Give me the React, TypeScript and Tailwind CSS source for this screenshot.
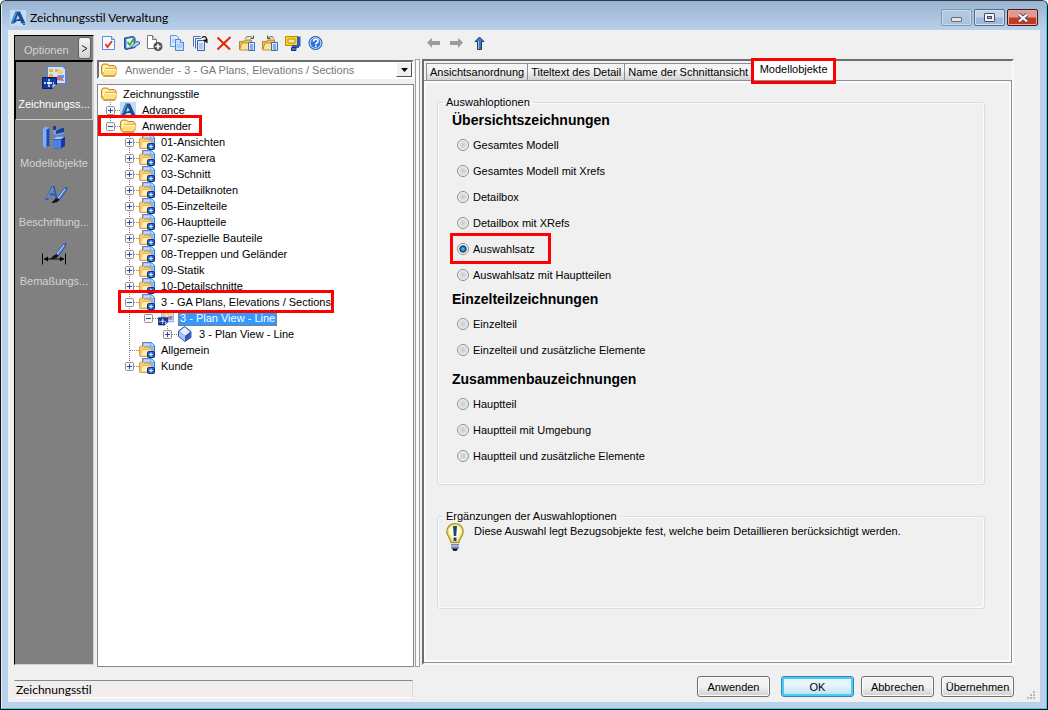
import { useState } from "react";
import type { ReactNode } from "react";

/* ---------- icons ---------- */

function Folder() {
  return (
    <svg width="17" height="16" viewBox="0 0 17 16" className="shrink-0">
      <path d="M.5 11.500V3.500l1.500-1.500h4.500L8 3.500h5.500L15 5v7l-1.500 2H2.500z" fill="#f5c24c" stroke="#c48a20" />
      <path d="M1.500 10V4l1-1H6l1.500 1.500h5.500l1 1H4.500L3 10z" fill="#fff3bf" />
      <path d="M4 6.500h12L13.800 13.500H2.300z" fill="#fddf85" />
      <path d="M4 6.500h12l-.5 1.500" fill="none" stroke="#e2aa3c" strokeWidth=".8" />
      <path d="M4.500 7.500h10.500" stroke="#fff8d8" />
      <path d="M2.500 14h11.500" stroke="#b9801a" />
    </svg>
  );
}

function FolderDoc() {
  return (
    <svg width="17" height="16" viewBox="0 0 17 16" className="shrink-0">
      <path d="M3.500 5V.500h9l3 3V11h-3z" fill="#8fb9f5" stroke="#4a80d8" />
      <path d="M5 1.500h6v2H5z" fill="#c9deff" />
      <path d="M12 .5v3.500h3.500z" fill="#fff" stroke="#4a80d8" strokeWidth=".6" />
      <path d="M.5 12.500V5l1-1h3l1.200 1.200h5l.8 1.300v2L9 14.500H1z" fill="#fbd06c" stroke="#e09b30" />
      <path d="M3.500 7.500h9L9.500 14H1.200z" fill="#fff0ba" stroke="#e8ac4c" strokeWidth=".8" />
      <rect x="8.500" y="9.500" width="7" height="6" rx="1" fill="#2a63c4" stroke="#0d2f80" />
      <path d="M12 10.500v4M10 12.500h4" stroke="#c9f4ff" strokeWidth="1.200" />
    </svg>
  );
}

function AdvanceLogo() {
  return (
    <svg width="16" height="16" viewBox="0 0 16 16" className="shrink-0">
      <rect width="16" height="16" fill="#c3dcf4" />
      <path d="M5.500 1.500h4.500L15.500 13.500h-4L10.500 11H7l-3 2.500H.8z" fill="#1a4f93" />
      <path d="M7.800 5 9.500 8.800 6 9.800z" fill="#c3dcf4" />
      <path d="M5.500 1.500h2L3 12.500.8 13.500z" fill="#4a8fd4" />
      <path d="M13 14.500h2" stroke="#1a4f93" />
    </svg>
  );
}

function StyleIcon({ size = 16 }: { size?: number }) {
  return (
    <svg width={size} height={size} viewBox="0 0 24 24" className="shrink-0">
      <path d="M5.500.5h15l3 3v14h-18z" fill="#cfe2ff" stroke="#4f83dd" />
      <path d="M7 3h4v3H7zM13 3h3v3h-3zM7 8h4v3H7z" fill="#f4b422" />
      <circle cx="18" cy="6" r="2.500" fill="#f7d35c" />
      <path d="m13 14 3-5 4 2 2 4z" fill="#c76f7e" />
      <path d="M17 9h5v3h-4z" fill="#5f95e8" />
      <path d="M.5 11.500h14v7l-4 4H.5z" fill="#123aa0" stroke="#0a1f6b" />
      <path d="M10.500 22.500v-4h4z" fill="#b9d4ff" />
      <path d="M7 13v8M2 17h10" stroke="#fff" strokeWidth="1.300" strokeDasharray="2 1" />
      <circle cx="7" cy="17" r="1.600" fill="#fff" />
    </svg>
  );
}

function Cube() {
  return (
    <svg width="16" height="16" viewBox="0 0 16 16" className="shrink-0">
      <path d="M1.500 5 7.500.5l6.500 5v6L8 15.500l-6.500-5z" fill="#5f86dc" stroke="#3355a8" />
      <path d="M2.500 5.300 7.500 1.300l5.500 4.500-5 4z" fill="#e4efff" />
      <path d="M2 5.800 8 10v5L2 10.300z" fill="#a9c6f7" />
      <path d="M8 10l5.500-4v5.300L8 15z" fill="#3557b4" />
    </svg>
  );
}

function ModelIcon() {
  return (
    <svg width="24" height="24" viewBox="0 0 24 24">
      <path d="M1 4 3.500 1.500 7.500 3v18L3 23l-2-2z" fill="#7db0fa" />
      <path d="M4.500 4.500 7.500 3v18L4.500 22z" fill="#1d49a8" />
      <path d="M11 1h3v5l6-3h2v6l-8 2-3-2z" fill="#1b3f97" />
      <path d="M11 5h3v4l8-2v2l-8 2-3-2z" fill="#6f9cf0" />
      <path d="m11 14 4-2.500h8V21l-4 2.500h-8z" fill="#17399a" />
      <path d="M11 14.500h8v9h-8z" fill="#4a7fe4" />
      <path d="m11 14 4-2.500h8L19 14z" fill="#9fc2fb" />
    </svg>
  );
}

function Brush() {
  return (
    <g>
      <path d="m13 14 7-9 3-2-1 4-6.500 9z" fill="#4a86e8" stroke="#183f96" strokeWidth=".7" />
      <path d="m14 14 7-9" stroke="#d3e6ff" />
      <path d="M15.500 15.500C14 19 9 19 7 19c2-1 3-4 6-4.500z" fill="#111" />
    </g>
  );
}

function TextStyleIcon() {
  return (
    <svg width="28" height="24" viewBox="-4 0 28 24">
      <path d="m3 15 5-12h2l2.500 11M5.500 10.500h6M1.500 15h3M10.500 14.500h3" fill="none" stroke="#2a58c4" strokeWidth="1.800" />
      <path d="m3.500 14 5-11" stroke="#8eb6ff" strokeWidth=".8" />
      <Brush />
    </svg>
  );
}

function DimensionIcon() {
  return (
    <svg width="26" height="24" viewBox="0 0 26 24">
      <path d="M1.500 10.500v11M24.500 10.500v11M3 16h20" stroke="#000" />
      <path d="m3 16 4-2.500v5zM23 16l-4-2.500v5z" fill="#000" />
      <g transform="translate(2 -3)">
        <Brush />
      </g>
    </svg>
  );
}

function Bulb() {
  return (
    <svg width="18" height="28" viewBox="0 0 18 28" className="shrink-0">
      <path d="M9 .7C4.200.7.800 4.200.800 8.500c0 5 4 6.500 4.200 11h8c.2-4.500 4.200-6 4.200-11C17.200 4.200 13.800.7 9 .7z" fill="#f4e27a" stroke="#a8962a" strokeWidth="1.300" />
      <path d="M9 2.500c-3.500 0-6 2.500-6 5.500 0 4 3.500 5 3.800 10h4.400c.3-5 3.800-6 3.800-10 0-3-2.500-5.500-6-5.500z" fill="#fffbd8" />
      <path d="M7 3h4l-.8 10H7.800zM7.500 14.500h3V18h-3z" fill="#1d4677" />
      <path d="M5 20h8v5l-2 2H7l-2-2z" fill="#7e86b8" />
      <path d="M5 20.500h8M5 23h8" stroke="#d5daf4" />
      <path d="M6 25.500h6L10.500 28h-3z" fill="#1a1a2a" />
    </svg>
  );
}

const toolIcons: { label: string; icon: ReactNode }[] = [
  {
    label: "Prüfen",
    icon: (
      <>
        <path d="M1.500 1.500h9l3 3v10h-12z" fill="#f7faff" stroke="#5a8ad8" />
        <path d="M10.500 1.500v3h3" fill="#cfe0fb" stroke="#5a8ad8" />
        <path d="m4.500 9 2 3L11 6" fill="none" stroke="#e83a1c" strokeWidth="2" />
      </>
    ),
  },
  {
    label: "Übernehmen und bearbeiten",
    icon: (
      <>
        <path d="M.5 3 9 1.500l2 1.500v9.500L2 14.500l-1.500-1z" fill="#3d7bd6" stroke="#1c4b93" />
        <path d="m2.500 4 7-1.200v8.700l-7 1.500z" fill="#eef8e6" />
        <path d="m3.500 7 2.200 3L9.500 4" fill="none" stroke="#2fa832" strokeWidth="1.800" />
        <path d="m7 11.500 5-5 3.500.5v2l-6 3.500z" fill="#a9ccf3" stroke="#1c4b93" strokeWidth=".8" />
      </>
    ),
  },
  {
    label: "Neu",
    icon: (
      <>
        <path d="M.5.5h5l4 4v9h-9z" fill="#fff" stroke="#777" />
        <path d="M5.500.5v4h4" fill="#ddd" stroke="#777" />
        <circle cx="11" cy="11.500" r="4.500" fill="#505050" />
        <path d="M11 8.800v5.400M8.300 11.500h5.400" stroke="#fff" strokeWidth="1.600" />
      </>
    ),
  },
  {
    label: "Kopieren",
    icon: (
      <>
        <path d="M.5.5h6l2 2v9h-8z" fill="#dceaff" stroke="#5f93e2" />
        <path d="M5.500 4.500h5l3 3v8h-8z" fill="#c9defd" stroke="#4f85d8" />
        <path d="M10.500 4.500v3h3" fill="#fff" stroke="#4f85d8" />
        <path d="M7 10h5M7 12h5M2 5h3M2 7h2" stroke="#8fb5f0" />
      </>
    ),
  },
  {
    label: "Mehrfach kopieren",
    icon: (
      <>
        <path d="M.5 11.500v-10h7M2.500 13.500v-10h6" fill="none" stroke="#4a72b8" />
        <path d="M4.500 5.500h7v10h-7z" fill="#dce9fc" stroke="#3b5f9e" />
        <path d="M6 9h4M6 11h4M6 13h4" stroke="#80a4d8" />
        <path d="M9 2.500c3-2 5-.5 4.500 3" fill="none" stroke="#111" strokeWidth="1.300" />
        <path d="m10 5 4.500-1v4.500z" fill="#111" />
      </>
    ),
  },
  {
    label: "Löschen",
    icon: <path d="m1.500 2.500 12.500 12M14.500 2 1.500 14.500" fill="none" stroke="#e0260c" strokeWidth="2" />,
  },
  {
    label: "Importieren",
    icon: (
      <>
        <path d="M.5 14.500v-8h4l1-1.500h7v3" fill="#f0bd50" stroke="#b8862a" />
        <path d="M3 8h12l-2 7H.7z" fill="#fde29a" stroke="#c4922e" />
        <path d="M6 3.500c2-2.500 5-2.500 7.500-1M14.500.5v3h-3" fill="none" stroke="#555" />
        <path d="M9.500 7.500h6v8h-6z" fill="#dbe9ff" stroke="#3a6cc0" />
        <path d="M11 10h3M11 12h3M11 14h3" stroke="#3a6cc0" />
      </>
    ),
  },
  {
    label: "Exportieren",
    icon: (
      <>
        <path d="M.5 14.500v-8h4l1-1.500h7v3" fill="#f0bd50" stroke="#b8862a" />
        <path d="M3 8h12l-2 7H.7z" fill="#fde29a" stroke="#c4922e" />
        <path d="M12 3.500c-1.500-2.500-4-2-6-1M5.500.5v3h3" fill="none" stroke="#555" />
        <path d="M9.500 7.500h6v8h-6z" fill="#dbe9ff" stroke="#3a6cc0" />
        <path d="M11 10h3M11 12h3M11 14h3" stroke="#3a6cc0" />
      </>
    ),
  },
  {
    label: "Komprimieren",
    icon: (
      <>
        <path d="M.5 1.500h12v9H.5z" fill="#fbd02f" stroke="#c28a08" />
        <path d="M3 4h7v4H3z" fill="#fdeb9a" stroke="#c28a08" />
        <path d="M12 1.500h3.500v10H12zM7 10h7v3H7z" fill="#2d5bb8" />
        <path d="M6.500 12.500H11v3H6.500z" fill="#3d6fd0" stroke="#16367c" />
      </>
    ),
  },
  {
    label: "Hilfe",
    icon: (
      <>
        <circle cx="7.500" cy="8" r="6.500" fill="#2f73dd" stroke="#1b4fae" />
        <circle cx="7.500" cy="8" r="5.400" fill="none" stroke="#dceaff" />
        <path d="M5.500 6.500c0-3 4.500-3 4.500-.3C10 7.800 7.700 7.700 7.700 9.500" fill="none" stroke="#fff" strokeWidth="1.600" />
        <path d="M6.900 10.500h1.700v1.600H6.900z" fill="#fff" />
      </>
    ),
  },
];

const arrowPath = "M1 7.500 6 3v3h8v4H6v3z";

/* ---------- tree ---------- */

type Cell = "none" | "line" | "tee" | "end";
type Node = {
  text: string;
  cells: Cell[];
  box?: "+" | "-";
  icon: ReactNode;
  selected?: boolean;
  mark?: string;
};

const folderNode = (text: string): Node => ({
  text,
  cells: ["none", "tee"],
  box: "+",
  icon: <FolderDoc />,
});

const nodes: Node[] = [
  { text: "Zeichnungsstile", cells: [], icon: <Folder /> },
  { text: "Advance", cells: ["tee"], box: "+", icon: <AdvanceLogo /> },
  { text: "Anwender", cells: ["end"], box: "-", icon: <Folder />, mark: "-left-[3px] -top-[3px] h-[21px] w-[104px]" },
  folderNode("01-Ansichten"),
  folderNode("02-Kamera"),
  folderNode("03-Schnitt"),
  folderNode("04-Detailknoten"),
  folderNode("05-Einzelteile"),
  folderNode("06-Hauptteile"),
  folderNode("07-spezielle Bauteile"),
  folderNode("08-Treppen und Geländer"),
  folderNode("09-Statik"),
  folderNode("10-Detailschnitte"),
  {
    text: "3 - GA Plans, Elevations / Sections",
    cells: ["none", "tee"],
    box: "-",
    icon: <FolderDoc />,
    mark: "left-[17px] -top-1 h-[23px] w-[216px]",
  },
  { text: "3 - Plan View - Line", cells: ["none", "line", "end"], box: "-", icon: <StyleIcon />, selected: true },
  { text: "3 - Plan View - Line", cells: ["none", "line", "none", "end"], box: "+", icon: <Cube /> },
  { text: "Allgemein", cells: ["none", "tee"], icon: <FolderDoc /> },
  { text: "Kunde", cells: ["none", "end"], box: "+", icon: <FolderDoc /> },
];

function Connector({ kind, box }: { kind: Cell; box?: "+" | "-" }) {
  return (
    <svg width="19" height="16" viewBox="0 0 19 16" className="shrink-0">
      {kind !== "none" && (
        <path d={kind === "end" ? "M9.500 0v8" : "M9.500 0v16"} stroke="#808080" strokeDasharray="1 1" />
      )}
      {(kind === "tee" || kind === "end") && <path d="M10 8.500h9" stroke="#808080" strokeDasharray="1 1" />}
      {box && (
        <>
          <rect x="5.500" y="4.500" width="8" height="8" rx="1" fill="#f6f6f6" stroke="#919191" />
          <path d={box === "+" ? "M7 8.500h5M9.500 6v5" : "M7 8.500h5"} stroke="#2b4b9b" />
        </>
      )}
    </svg>
  );
}

function Mark({ className }: { className: string }) {
  return <span className={`pointer-events-none absolute z-10 border-[3px] border-[#ff0000] ${className}`} />;
}

function TreeRow({ node }: { node: Node }) {
  return (
    <li className="relative flex h-4 items-center whitespace-nowrap">
      {node.cells.map((kind, i) => (
        <Connector key={i} kind={kind} box={i === node.cells.length - 1 ? node.box : undefined} />
      ))}
      <span className="flex w-5 shrink-0">{node.icon}</span>
      <span
        className={
          node.selected
            ? "border border-dotted border-[#c66a00] bg-[#3399ff] px-px leading-[14px] text-white"
            : "px-0.5 leading-4"
        }
      >
        {node.text}
      </span>
      {node.mark && <Mark className={node.mark} />}
    </li>
  );
}

/* ---------- option groups ---------- */

const groups = [
  {
    title: "Übersichtszeichnungen",
    options: [
      "Gesamtes Modell",
      "Gesamtes Modell mit Xrefs",
      "Detailbox",
      "Detailbox mit XRefs",
      "Auswahlsatz",
      "Auswahlsatz mit Hauptteilen",
    ],
  },
  { title: "Einzelteilzeichnungen", options: ["Einzelteil", "Einzelteil und zusätzliche Elemente"] },
  {
    title: "Zusammenbauzeichnungen",
    options: ["Hauptteil", "Hauptteil mit Umgebung", "Hauptteil und zusätzliche Elemente"],
  },
];

const sideItems = [
  { label: "Zeichnungss...", icon: <StyleIcon size={24} /> },
  { label: "Modellobjekte", icon: <ModelIcon /> },
  { label: "Beschriftung...", icon: <TextStyleIcon /> },
  { label: "Bemaßungs...", icon: <DimensionIcon /> },
];

const tabs = ["Ansichtsanordnung", "Titeltext des Detail", "Name der Schnittansicht"];

const buttonBase = "h-[21px] w-[73px] rounded-[3px] border text-center leading-[18px]";
const buttonPlain =
  "border-[#707070] bg-linear-to-b from-[#f2f2f2] from-50% to-[#cfcfcf] to-100% shadow-[inset_0_0_0_1px_#fcfcfc]";

function TitleBar() {
  return (
    <header className="flex h-[29px] items-center bg-linear-to-b from-[#99b4d1] to-[#b9d1ea] px-2 pt-1">
      <AdvanceLogo />
      <h1 className="ml-1 flex-1 font-['Lato','Open_Sans',sans-serif] text-[12px] leading-4">
        Zeichnungsstil Verwaltung
      </h1>
      <div className="flex gap-0.5">
        <button
          aria-label="Minimieren"
          className="flex h-[17px] w-[31px] items-center justify-center rounded-[2px] border border-[#7f9bb8] bg-linear-to-b from-[#b5cbe3] to-[#a8c2de] shadow-[inset_0_0_0_1px_#c9daec]"
        >
          <span className="mt-1 h-[5px] w-[11px] rounded-[1px] border border-[#66707c] bg-[#e4e4e0]" />
        </button>
        <button
          aria-label="Maximieren"
          className="flex h-[17px] w-[31px] items-center justify-center rounded-[2px] border border-[#566b85] bg-linear-to-b from-[#c3d4e8] from-45% to-[#a0b9d6] to-55% shadow-[inset_0_0_0_1px_#d3e1f0]"
        >
          <span className="flex h-[9px] w-[11px] items-center justify-center rounded-[1px] border border-[#454c66] bg-[#f4f4f4]">
            <span className="h-[3px] w-[5px] border border-[#454c66] bg-[#9db6d4]" />
          </span>
        </button>
        <button
          aria-label="Schließen"
          className="flex h-[17px] w-[31px] items-center justify-center rounded-[2px] border border-[#4a1420] bg-linear-to-b from-[#e09a8c] from-45% to-[#c23a22] to-55% shadow-[inset_0_0_0_1px_#e8ab9f]"
        >
          <svg width="12" height="10" viewBox="0 0 12 10">
            <path d="m2 1.500 8 7M10 1.500l-8 7" stroke="#4b4b62" strokeWidth="4" />
            <path d="m2 1.500 8 7M10 1.500l-8 7" stroke="#fff" strokeWidth="2.200" />
          </svg>
        </button>
      </div>
    </header>
  );
}

export default function App() {
  const [choice, setChoice] = useState("Auswahlsatz");

  return (
    <div className="flex min-h-screen flex-col overflow-hidden rounded-t-[6px] border border-t-[#33333d] border-r-[#111] border-b-[#111] border-l-[#111] bg-[#b9d1ea] font-['Liberation_Sans',Arial,sans-serif] text-[11px] text-black">
      <div className="flex flex-1 flex-col border-r border-b border-l border-r-[#2fd3ea] border-b-[#2fd3ea] border-l-[#e3f0fb]">
        <TitleBar />
        <main className="mx-1.5 mb-1.5 flex flex-1 flex-col bg-[#f0f0f0]">
          <div className="flex flex-1 pr-[26px] pl-1.5">
            {/* options bar */}
            <nav className="mt-[5px] mb-0.5 w-20 shrink-0 border-t border-r border-b border-l border-t-black border-r-[#d0d0d0] border-b-[#d0d0d0] border-l-black bg-[#808080] text-[#d6d3ce]">
              <div className="flex h-[25px] items-center justify-between border-b border-black pr-0.5 pl-[9px]">
                <span className="pt-1">Optionen</span>
                <button
                  aria-label="Optionen einklappen"
                  className="h-[22px] w-[13px] rounded-[3px] border border-[#606060] bg-linear-to-b from-[#f4f4f4] to-[#d2d2d2] text-black"
                >
                  <svg width="11" height="9" viewBox="0 0 11 9">
                    <path d="m3 1.500 5 3-5 3" fill="none" stroke="#222" />
                  </svg>
                </button>
              </div>
              {sideItems.map((item, i) => (
                <button
                  key={item.label}
                  className={`flex h-[59px] w-full flex-col items-center border pt-1 ${
                    i === 0 ? "border-t-black border-r-[#d4d0c8] border-b-[#d4d0c8] border-l-black text-white" : "border-transparent"
                  }`}
                >
                  {item.icon}
                  <span className="mt-1.5 leading-4">{item.label}</span>
                </button>
              ))}
            </nav>

            {/* style tree */}
            <section className="ml-[3px] flex w-[317px] shrink-0 flex-col">
              <div className="flex h-[30px] pb-1">
                {toolIcons.map((tool) => (
                  <button key={tool.label} aria-label={tool.label} className="flex w-[23px] items-center justify-center">
                    <svg width="16" height="16" viewBox="0 0 16 16">
                      {tool.icon}
                    </svg>
                  </button>
                ))}
              </div>
              <div className="flex h-[19px] items-center border-2 border-t-[#6d6d6d] border-r-white border-b-white border-l-[#6d6d6d] bg-white pl-0.5">
                <Folder />
                <select
                  aria-label="Zeichnungsstil"
                  className="h-4 min-w-0 flex-1 appearance-none bg-transparent pl-[7px] leading-4 text-[#777]"
                >
                  <option>Anwender - 3 - GA Plans, Elevations / Sections</option>
                </select>
                <span className="flex h-[15px] w-4 items-center justify-center border border-t-white border-r-[#555] border-b-[#555] border-l-white bg-[#f0f0f0]">
                  <svg width="7" height="4" viewBox="0 0 7 4">
                    <path d="M0 0h7L3.500 4z" fill="#000" />
                  </svg>
                </span>
              </div>
              <ul className="mt-[5px] flex-1 border border-[#828790] bg-white pt-px pl-[3px]">
                {nodes.map((node, i) => (
                  <TreeRow key={i} node={node} />
                ))}
              </ul>
            </section>

            {/* splitter */}
            <div className="mt-[29px] ml-px w-[5px] shrink-0 border border-[#a0a0a0] bg-[#f8f8f8]" />

            {/* detail pane */}
            <section className="ml-0.5 flex min-w-0 flex-1 flex-col">
              <div className="flex h-[29px] pb-[3px]">
                <button aria-label="Zurück" className="flex w-[23px] items-center justify-center">
                  <svg width="16" height="16" viewBox="0 0 16 16">
                    <path d={arrowPath} fill="#9c9c9c" />
                  </svg>
                </button>
                <button aria-label="Vor" className="flex w-[23px] items-center justify-center">
                  <svg width="16" height="16" viewBox="0 0 16 16">
                    <path d={arrowPath} fill="#9c9c9c" transform="matrix(-1 0 0 1 15 0)" />
                  </svg>
                </button>
                <button aria-label="Nach oben" className="flex w-[23px] items-center justify-center">
                  <svg width="16" height="16" viewBox="0 0 16 16">
                    <path d="M7.500 2 12 6.500H9.500v8h-4v-8H3z" fill="#4274b8" stroke="#1d3c70" />
                    <path d="M6.500 6v8" stroke="#9cc0ee" />
                  </svg>
                </button>
              </div>
              <div className="mb-0.5 flex flex-1 flex-col border-2 border-t-[#6d6d6d] border-r-[#fafafa] border-b-[#fafafa] border-l-[#6d6d6d]">
                <div role="tablist" className="flex h-[19px] items-end pl-0.5 whitespace-nowrap">
                  {tabs.map((tab) => (
                    <button
                      key={tab}
                      role="tab"
                      className="-mr-px h-[17px] border border-b-0 border-[#8c8e94] bg-linear-to-b from-[#f4f4f4] from-40% to-[#d2d2d2] px-[3px] leading-[17px]"
                    >
                      {tab}
                    </button>
                  ))}
                  <button role="tab" aria-selected="true" className="relative h-[19px] w-[85px] bg-white pb-1 leading-4">
                    Modellobjekte
                    <Mark className="inset-x-0 -top-[3px] h-[26px]" />
                  </button>
                </div>
                <div
                  role="tabpanel"
                  className="flex-1 border-t border-r border-b border-[#8c8e94] pr-[26px] pl-[13px] shadow-[inset_0_0_0_2px_#fbfbfb]"
                >
                  <fieldset className="mt-3.5 rounded-[3px] border border-[#d5dfe5] px-3 pb-[15px] shadow-[inset_0_0_0_1px_#fbfbfb]">
                    <legend className="-ml-[7px] px-[3px] leading-[14px]">Auswahloptionen</legend>
                    {groups.map((group, g) => (
                      <div key={group.title} className={g === 2 ? "mt-[5px]" : ""}>
                        <h2 className="pl-0.5 text-[14px] leading-[23px] font-bold">{group.title}</h2>
                        {group.options.map((option) => (
                          <div key={option} className="relative flex h-[26px] items-center">
                            <label className="flex items-center gap-1">
                              <input
                                type="radio"
                                name="auswahl"
                                checked={choice === option}
                                onChange={() => setChoice(option)}
                                className="ml-[7px] size-3 appearance-none rounded-full border border-[#8e8f8f] bg-radial from-[#c8ccd0] to-[#f4f4f4] shadow-[inset_0_0_0_1px_#f4f4f4] checked:from-[#3fb5ea] checked:from-10% checked:via-[#123f66] checked:via-45% checked:to-[#f4f4f4] checked:to-60%"
                              />
                              {option}
                            </label>
                            {option === "Auswahlsatz" && <Mark className="top-[-3px] left-0 h-[31px] w-[101px]" />}
                          </div>
                        ))}
                      </div>
                    ))}
                  </fieldset>

                  <fieldset className="mt-6 h-[100px] rounded-[3px] border border-[#d5dfe5] pl-2 shadow-[inset_0_0_0_1px_#fbfbfb]">
                    <legend className="-ml-[3px] px-[3px] leading-[14px]">Ergänzungen der Auswahloptionen</legend>
                    <div className="flex gap-2.5">
                      <Bulb />
                      <p className="leading-4">
                        Diese Auswahl legt Bezugsobjekte fest, welche beim Detaillieren berücksichtigt werden.
                      </p>
                    </div>
                  </fieldset>
                </div>
              </div>
            </section>
          </div>

          <footer className="relative flex h-[35px] items-start justify-between pr-[26px] pl-1.5">
            <div className="mt-[13px] h-[18px] w-[399px] border border-t-[#8a8a8a] border-r-[#d8d8d8] border-b-white border-l-transparent bg-[#f1edec] px-px font-['Lato','Open_Sans',sans-serif] text-[12px] leading-[17px]">
              Zeichnungsstil
            </div>
            <div className="mt-[9px] flex gap-[7px]">
              <button className={`${buttonBase} ${buttonPlain}`}>Anwenden</button>
              <button
                className={`${buttonBase} ml-1 border-[#3c7fb1] bg-linear-to-b from-[#e8f5fc] from-45% to-[#b5dff5] to-100% shadow-[inset_0_0_0_2px_#45cdf5]`}
              >
                OK
              </button>
              <button className={`${buttonBase} ${buttonPlain}`}>Abbrechen</button>
              <button className={`${buttonBase} ${buttonPlain}`}>Übernehmen</button>
            </div>
            <svg width="9" height="9" viewBox="0 0 9 9" className="absolute right-1 bottom-0.5">
              <path d="M6 0h2v2H6zM3 3h2v2H3zM6 3h2v2H6zM0 6h2v2H0zM3 6h2v2H3zM6 6h2v2H6z" fill="#b8b8b8" />
            </svg>
          </footer>
        </main>
      </div>
    </div>
  );
}
